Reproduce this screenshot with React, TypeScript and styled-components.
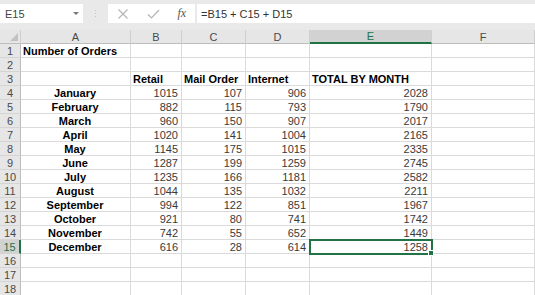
import React from 'react';
import styled, { createGlobalStyle } from 'styled-components';

const GlobalStyle = createGlobalStyle`
  html, body {
    margin: 0;
    padding: 0;
    background: #ffffff;
    font-family: "Liberation Sans", Arial, sans-serif;
  }
`;

const Sheet = styled.div`
  width: 535px;
  height: 295px;
  overflow: hidden;
  background: #ffffff;
`;

const FormulaBar = styled.div`
  display: flex;
  align-items: center;
  height: 30px;
  padding: 0 0 3px 0;
  box-sizing: border-box;
  background: #e9e9e9;
`;

const NameBox = styled.div`
  display: flex;
  align-items: center;
  justify-content: space-between;
  width: 83px;
  height: 19px;
  padding: 0 4px 0 5px;
  box-sizing: border-box;
  background: #ffffff;
  font-size: 11px;
  color: #444444;
`;

const Caret = styled.span`
  width: 0;
  height: 0;
  border-left: 3px solid transparent;
  border-right: 3px solid transparent;
  border-top: 3px solid #777777;
`;

const Grip = styled.div`
  width: 25px;
  display: flex;
  flex-direction: column;
  align-items: center;
  gap: 2px;
  & > span {
    width: 1px;
    height: 1px;
    background: #c4c4c4;
  }
`;

const IconBox = styled.div`
  display: flex;
  align-items: center;
  justify-content: space-around;
  width: 87px;
  height: 19px;
  background: #ffffff;
`;

const Fx = styled.span`
  font-family: "Liberation Serif", "Times New Roman", serif;
  font-style: italic;
  font-size: 12px;
  color: #555555;
`;

const FormulaInput = styled.div`
  flex: 1;
  height: 19px;
  margin-left: 2px;
  display: flex;
  align-items: center;
  padding-left: 4px;
  background: #ffffff;
  font-size: 11px;
  color: #333333;
`;

const Grid = styled.div`
  display: grid;
  grid-template-columns: 21px 110px 51px 64px 64px 122px 1fr;
  grid-auto-rows: 14px;
`;

const Corner = styled.div`
  position: relative;
  background: #e6e6e6;
  border-right: 1px solid #cfcfcf;
  border-bottom: 1px solid #bdbdbd;
  &::after {
    content: '';
    position: absolute;
    right: 2px;
    bottom: 2px;
    width: 0;
    height: 0;
    border-left: 8px solid transparent;
    border-bottom: 8px solid #c2c2c2;
  }
`;

const ColHead = styled.div<{ $active?: boolean }>`
  display: flex;
  align-items: center;
  justify-content: center;
  background: ${({ $active }) => ($active ? '#d2d2d2' : '#e6e6e6')};
  border-right: 1px solid #cfcfcf;
  border-bottom: ${({ $active }) => ($active ? '2px solid #217346' : '1px solid #bdbdbd')};
  font-size: 11px;
  color: ${({ $active }) => ($active ? '#217346' : '#4a4a4a')};
  box-sizing: border-box;
`;

const RowHead = styled.div<{ $active?: boolean }>`
  display: flex;
  align-items: center;
  justify-content: center;
  background: ${({ $active }) => ($active ? '#d2d2d2' : '#e6e6e6')};
  border-right: ${({ $active }) => ($active ? '2px solid #217346' : '1px solid #bdbdbd')};
  border-bottom: 1px solid #d4d4d4;
  font-size: 11px;
  color: ${({ $active }) => ($active ? '#217346' : '#4a4a4a')};
  box-sizing: border-box;
`;

const Cell = styled.div<{ $align?: 'left' | 'center' | 'right'; $bold?: boolean; $selected?: boolean }>`
  position: relative;
  display: flex;
  align-items: center;
  justify-content: ${({ $align }) =>
    $align === 'right' ? 'flex-end' : $align === 'center' ? 'center' : 'flex-start'};
  padding: 0 3px 0 2px;
  overflow: visible;
  white-space: nowrap;
  border-right: 1px solid #dadada;
  border-bottom: 1px solid #dadada;
  font-size: 11px;
  font-weight: ${({ $bold }) => ($bold ? 700 : 400)};
  color: ${({ $bold }) => ($bold ? '#000000' : '#3a3a3a')};
  box-sizing: border-box;
  ${({ $selected }) =>
    $selected &&
    `
    outline: 2px solid #217346;
    outline-offset: -1px;
    z-index: 1;
    &::after {
      content: '';
      position: absolute;
      right: -3px;
      bottom: -3px;
      width: 4px;
      height: 4px;
      background: #217346;
      border: 1px solid #ffffff;
    }
  `}
`;

const months = [
  ['January', 1015, 107, 906],
  ['February', 882, 115, 793],
  ['March', 960, 150, 907],
  ['April', 1020, 141, 1004],
  ['May', 1145, 175, 1015],
  ['June', 1287, 199, 1259],
  ['July', 1235, 166, 1181],
  ['August', 1044, 135, 1032],
  ['September', 994, 122, 851],
  ['October', 921, 80, 741],
  ['November', 742, 55, 652],
  ['December', 616, 28, 614],
] as [string, number, number, number][];

const cols = ['A', 'B', 'C', 'D', 'E', 'F'];

const App: React.FC = () => {
  return (
    <Sheet>
      <GlobalStyle />
      <FormulaBar>
        <NameBox>
          E15
          <Caret />
        </NameBox>
        <Grip>
          <span />
          <span />
          <span />
        </Grip>
        <IconBox>
          <svg width="12" height="12" viewBox="0 0 12 12">
            <path d="M1.5 1.5 L10.5 10.5 M10.5 1.5 L1.5 10.5" stroke="#b5b5b5" strokeWidth="1.2" fill="none" />
          </svg>
          <svg width="13" height="12" viewBox="0 0 13 12">
            <path d="M1 6.5 L4.5 10 L12 2" stroke="#b5b5b5" strokeWidth="1.2" fill="none" />
          </svg>
          <Fx>fx</Fx>
        </IconBox>
        <FormulaInput>=B15 + C15 + D15</FormulaInput>
      </FormulaBar>
      <Grid>
        <Corner />
        {cols.map((c) => (
          <ColHead key={c} $active={c === 'E'}>
            {c}
          </ColHead>
        ))}

        <RowHead>1</RowHead>
        <Cell $bold>Number of Orders</Cell>
        <Cell />
        <Cell />
        <Cell />
        <Cell />
        <Cell />

        <RowHead>2</RowHead>
        {cols.map((c) => (
          <Cell key={c} />
        ))}

        <RowHead>3</RowHead>
        <Cell />
        <Cell $bold>Retail</Cell>
        <Cell $bold>Mail Order</Cell>
        <Cell $bold>Internet</Cell>
        <Cell $bold>TOTAL BY MONTH</Cell>
        <Cell />

        {months.map(([name, retail, mail, net], i) => {
          const row = i + 4;
          return (
            <React.Fragment key={name}>
              <RowHead $active={row === 15}>{row}</RowHead>
              <Cell $align="center" $bold>
                {name}
              </Cell>
              <Cell $align="right">{retail}</Cell>
              <Cell $align="right">{mail}</Cell>
              <Cell $align="right">{net}</Cell>
              <Cell $align="right" $selected={row === 15}>
                {retail + mail + net}
              </Cell>
              <Cell />
            </React.Fragment>
          );
        })}

        {[16, 17, 18].map((row) => (
          <React.Fragment key={row}>
            <RowHead>{row}</RowHead>
            {cols.map((c) => (
              <Cell key={c} />
            ))}
          </React.Fragment>
        ))}
      </Grid>
    </Sheet>
  );
};

export default App;
